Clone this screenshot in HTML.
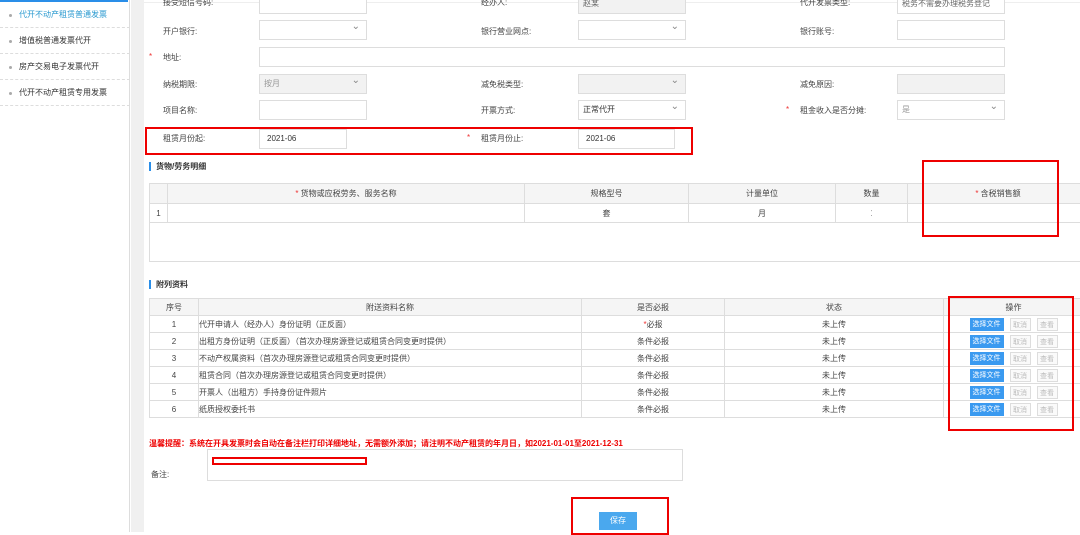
<!DOCTYPE html>
<html><head><meta charset="utf-8"><style>
*{margin:0;padding:0;box-sizing:border-box}
body{width:1080px;height:532px;overflow:hidden;background:#fff;font-family:"Liberation Sans","Noto Sans CJK SC",sans-serif;font-size:8px;color:#444;position:relative}
.a{position:absolute}
.side{left:0;top:0;width:130px;height:532px;background:#fff;border-right:1px solid #ddd}
.si{position:absolute;left:0;width:130px;height:26px;line-height:26px;padding-left:19px;font-size:8px;color:#333;border-bottom:1px dashed #ddd}
.si:before{content:"";position:absolute;left:9px;top:12px;width:3px;height:3px;background:#aaa;border-radius:50%}
.gap{left:131px;top:0;width:13px;height:532px;background:#f0f0f0}
.lbl{position:absolute;font-size:8px;color:#444}
.inp{position:absolute;height:20px;border:1px solid #ddd;background:#fff;font-size:8px;line-height:18px;padding-left:4px;color:#333}
.g{background:#f2f2f2;color:#999}
.sel:after{content:"⌄";position:absolute;right:6px;top:-3px;color:#888;font-size:10px}
.req{position:absolute;color:#e33;font-size:8px}
.rb{position:absolute;border:2px solid #e00}
.sec{position:absolute;left:149px;font-size:8px;font-weight:bold;color:#333;padding-left:5px;border-left:2px solid #2a8ee8;line-height:9px}
table{border-collapse:collapse;position:absolute;font-size:8px;color:#444}
td,th{border:1px solid #ddd;text-align:center;font-weight:normal;padding:0}
th{background:#f5f5f5}
.btn{display:inline-block;height:13px;line-height:13px;font-size:7px;vertical-align:middle;margin:0 3px}
.b1{background:#3a9af0;color:#fff;width:34px}
.b2{border:1px solid #ddd;color:#bbb;width:21px;background:#fafafa}
</style></head><body>
<div class="a side">
<div class="si" style="top:2px;color:#2a9ad0">代开不动产租赁普通发票</div>
<div class="si" style="top:28px">增值税普通发票代开</div>
<div class="si" style="top:54px">房产交易电子发票代开</div>
<div class="si" style="top:80px">代开不动产租赁专用发票</div>
<div style="position:absolute;left:0;top:0;width:128px;height:2px;background:#2a8ee8"></div>
</div>
<div class="a gap"></div>
<div class="a" style="left:144px;top:0;width:936px;height:3px;border-bottom:1px solid #eee"></div>

<div class="lbl" style="left:163px;top:-3px">接受短信号码:</div><div class="inp" style="left:259px;top:-6px;width:108px"></div>
<div class="lbl" style="left:481px;top:-3px">经办人:</div><div class="inp g" style="left:578px;top:-6px;width:108px;color:#666">赵某</div>
<div class="lbl" style="left:800px;top:-3px">代开发票类型:</div><div class="inp" style="left:897px;top:-6px;width:108px;color:#666">税务不需要办理税务登记</div>

<div class="lbl" style="left:163px;top:26px">开户银行:</div><div class="inp sel" style="left:259px;top:20px;width:108px"></div>
<div class="lbl" style="left:481px;top:26px">银行营业网点:</div><div class="inp sel" style="left:578px;top:20px;width:108px"></div>
<div class="lbl" style="left:800px;top:26px">银行账号:</div><div class="inp" style="left:897px;top:20px;width:108px"></div>

<div class="req" style="left:149px;top:52px">*</div>
<div class="lbl" style="left:163px;top:52px">地址:</div><div class="inp" style="left:259px;top:47px;width:746px"></div>

<div class="lbl" style="left:163px;top:79px">纳税期限:</div><div class="inp g sel" style="left:259px;top:74px;width:108px">按月</div>
<div class="lbl" style="left:481px;top:79px">减免税类型:</div><div class="inp g sel" style="left:578px;top:74px;width:108px"></div>
<div class="lbl" style="left:800px;top:79px">减免原因:</div><div class="inp g" style="left:897px;top:74px;width:108px"></div>

<div class="lbl" style="left:163px;top:105px">项目名称:</div><div class="inp" style="left:259px;top:100px;width:108px"></div>
<div class="lbl" style="left:481px;top:105px">开票方式:</div><div class="inp sel" style="left:578px;top:100px;width:108px">正常代开</div>
<div class="req" style="left:786px;top:105px">*</div>
<div class="lbl" style="left:800px;top:105px">租金收入是否分摊:</div><div class="inp sel" style="left:897px;top:100px;width:108px;color:#999">是</div>

<div class="rb" style="left:145px;top:127px;width:548px;height:28px"></div>
<div class="lbl" style="left:163px;top:133px">租赁月份起:</div><div class="inp" style="left:259px;top:129px;width:88px;padding-left:7px">2021-06</div>
<div class="req" style="left:467px;top:133px">*</div>
<div class="lbl" style="left:481px;top:133px">租赁月份止:</div><div class="inp" style="left:578px;top:129px;width:97px;padding-left:7px">2021-06</div>

<div class="sec" style="top:162px">货物/劳务明细</div>
<div class="a" style="left:149px;top:183px;width:931px;height:79px;border:1px solid #ddd;border-right:none"></div>
<table style="left:149px;top:183px;width:940px">
<tr style="height:20px"><th style="width:18px"></th><th style="width:357px"><span style="color:#e33">*</span> 货物或应税劳务、服务名称</th><th style="width:164px">规格型号</th><th style="width:147px">计量单位</th><th style="width:72px">数量</th><th><span style="color:#e33">*</span> 含税销售额</th></tr>
<tr style="height:19px"><td>1</td><td></td><td>套</td><td>月</td><td style="color:#999">⁚</td><td></td></tr>
</table>
<div class="rb" style="left:922px;top:160px;width:137px;height:77px"></div>

<div class="sec" style="top:280px">附列资料</div>
<table style="left:149px;top:298px;width:935px">
<tr style="height:17px"><th style="width:49px">序号</th><th style="width:383px">附送资料名称</th><th style="width:143px">是否必报</th><th style="width:219px">状态</th><th>操作</th></tr>
<tr style="height:17px"><td>1</td><td style="text-align:left">代开申请人（经办人）身份证明（正反面）</td><td><span style="color:#e33">*</span>必报</td><td>未上传</td><td><span class="btn b1">选择文件</span><span class="btn b2">取消</span><span class="btn b2">查看</span></td></tr>
<tr style="height:17px"><td>2</td><td style="text-align:left">出租方身份证明（正反面）（首次办理房源登记或租赁合同变更时提供）</td><td>条件必报</td><td>未上传</td><td><span class="btn b1">选择文件</span><span class="btn b2">取消</span><span class="btn b2">查看</span></td></tr>
<tr style="height:17px"><td>3</td><td style="text-align:left">不动产权属资料（首次办理房源登记或租赁合同变更时提供）</td><td>条件必报</td><td>未上传</td><td><span class="btn b1">选择文件</span><span class="btn b2">取消</span><span class="btn b2">查看</span></td></tr>
<tr style="height:17px"><td>4</td><td style="text-align:left">租赁合同（首次办理房源登记或租赁合同变更时提供）</td><td>条件必报</td><td>未上传</td><td><span class="btn b1">选择文件</span><span class="btn b2">取消</span><span class="btn b2">查看</span></td></tr>
<tr style="height:17px"><td>5</td><td style="text-align:left">开票人（出租方）手持身份证件照片</td><td>条件必报</td><td>未上传</td><td><span class="btn b1">选择文件</span><span class="btn b2">取消</span><span class="btn b2">查看</span></td></tr>
<tr style="height:17px"><td>6</td><td style="text-align:left">纸质授权委托书</td><td>条件必报</td><td>未上传</td><td><span class="btn b1">选择文件</span><span class="btn b2">取消</span><span class="btn b2">查看</span></td></tr>
</table>
<div class="rb" style="left:948px;top:296px;width:126px;height:135px"></div>

<div class="a" style="left:149px;top:438px;color:#e00;font-weight:bold;font-size:8px">温馨提醒：系统在开具发票时会自动在备注栏打印详细地址，无需额外添加；请注明不动产租赁的年月日，如2021-01-01至2021-12-31</div>
<div class="lbl" style="left:151px;top:469px">备注:</div>
<div class="inp" style="left:207px;top:449px;width:476px;height:32px"></div>
<div class="rb" style="left:212px;top:457px;width:155px;height:8px"></div>

<div class="rb" style="left:571px;top:497px;width:98px;height:38px"></div>
<div class="a" style="left:599px;top:512px;width:38px;height:18px;background:#4aa8ee;color:#fff;text-align:center;line-height:18px;font-size:8px">保存</div>
</body></html>
